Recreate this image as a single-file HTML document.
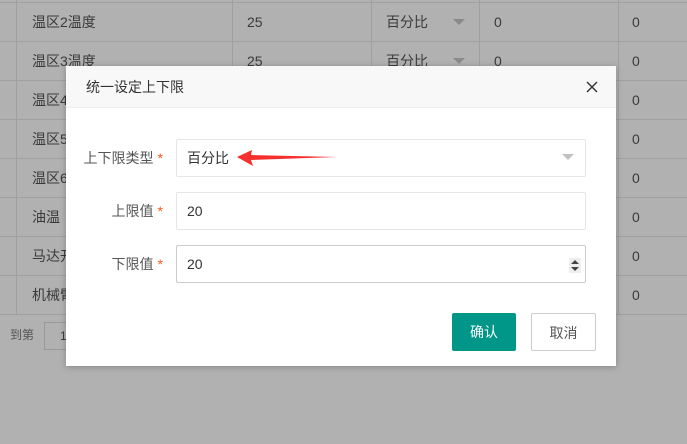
<!DOCTYPE html>
<html><head><meta charset="utf-8"><style>
*{margin:0;padding:0;box-sizing:border-box}
body{width:687px;height:444px;overflow:hidden;background:#b1b1b1;font-family:"Liberation Sans","Noto Sans CJK SC",sans-serif;font-size:14px;color:#3a3a3a;position:relative}
.hl{position:absolute;left:0;width:687px;height:1px;background:#a0a0a0}
.vl{position:absolute;top:0;width:1px;height:314px;background:#a0a0a0}
.t{position:absolute;line-height:16px}
.modal{position:absolute;left:66px;top:66px;width:550px;height:300px;background:#fff;box-shadow:0 1px 6px rgba(0,0,0,.25)}
.hd{height:42px;background:#f8f8f8;border-bottom:1px solid #eee;padding-left:20px;line-height:42px;color:#333;font-size:14px}
.lbl{position:absolute;right:453px;text-align:right;color:#555;line-height:38px;font-size:14px}
.lbl i{color:#ff5722;font-style:normal;margin-left:4px}
.inp{position:absolute;left:110px;width:410px;height:38px;border:1px solid #e6e6e6;border-radius:2px;padding-left:10px;line-height:36px;color:#333}
.btn{position:absolute;top:247px;height:38px;line-height:38px;text-align:center;border-radius:2px;font-size:14px}
.tri{position:absolute;left:453px}
</style></head><body>
<div class="hl" style="top:2px"></div><div class="hl" style="top:41px"></div><div class="hl" style="top:80px"></div><div class="hl" style="top:119px"></div><div class="hl" style="top:158px"></div><div class="hl" style="top:197px"></div><div class="hl" style="top:236px"></div><div class="hl" style="top:275px"></div><div class="hl" style="top:314px"></div>
<div class="vl" style="left:16px"></div><div class="vl" style="left:232px"></div><div class="vl" style="left:371px"></div><div class="vl" style="left:479px"></div><div class="vl" style="left:618px"></div>
<div class="t" style="left:32px;top:14px">温区2温度</div><div class="t" style="left:247px;top:14px">25</div><div class="t" style="left:386px;top:14px">百分比</div><svg class="tri" style="top:19px" width="12" height="7"><path d="M0 0H12L6 6Z" fill="#8a8a8a"/></svg><div class="t" style="left:494px;top:14px">0</div><div class="t" style="left:632px;top:14px">0</div>
<div class="t" style="left:32px;top:53px">温区3温度</div><div class="t" style="left:247px;top:53px">25</div><div class="t" style="left:386px;top:53px">百分比</div><svg class="tri" style="top:58px" width="12" height="7"><path d="M0 0H12L6 6Z" fill="#8a8a8a"/></svg><div class="t" style="left:494px;top:53px">0</div><div class="t" style="left:632px;top:53px">0</div>
<div class="t" style="left:32px;top:92px">温区4</div><div class="t" style="left:632px;top:92px">0</div>
<div class="t" style="left:32px;top:131px">温区5</div><div class="t" style="left:632px;top:131px">0</div>
<div class="t" style="left:32px;top:170px">温区6</div><div class="t" style="left:632px;top:170px">0</div>
<div class="t" style="left:32px;top:209px">油温</div><div class="t" style="left:632px;top:209px">0</div>
<div class="t" style="left:32px;top:248px">马达开</div><div class="t" style="left:632px;top:248px">0</div>
<div class="t" style="left:32px;top:287px">机械臂</div><div class="t" style="left:632px;top:287px">0</div>
<div class="t" style="left:10px;top:327px;font-size:12px;color:#555">到第</div>
<div style="position:absolute;left:44px;top:322px;width:30px;height:28px;border:1px solid #999"></div><div class="t" style="left:60px;top:328px;font-size:12px">1</div>
<div class="modal">
<div class="hd">统一设定上下限</div>
<svg style="position:absolute;left:520px;top:15px" width="12" height="12" viewBox="0 0 12 12"><path d="M1 1L11 11M11 1L1 11" stroke="#333" stroke-width="1.4"/></svg>
<div class="lbl" style="top:73px">上下限类型<i>*</i></div>
<div class="inp" style="top:73px">百分比</div>
<svg style="position:absolute;left:496px;top:88px" width="12" height="8"><path d="M0 0H12L6 6Z" fill="#c2c2c2"/></svg>
<svg style="position:absolute;left:171px;top:84px" width="100" height="16"><path d="M0 7L15 0L14 5L100 7L14 10L16 16Z" fill="#f5302f"/></svg>
<div class="lbl" style="top:126px">上限值<i>*</i></div>
<div class="inp" style="top:126px">20</div>
<div class="lbl" style="top:179px">下限值<i>*</i></div>
<div class="inp" style="top:179px;border-color:#ccc">20</div>
<div style="position:absolute;left:503px;top:192px;width:12px;height:15px;background:#eee"></div>
<svg style="position:absolute;left:504px;top:193px" width="10" height="13"><path d="M1 5L5 1L9 5ZM1 8L5 12L9 8Z" fill="#444"/></svg>
<div class="btn" style="left:386px;width:64px;background:#009688;color:#fff">确认</div>
<div class="btn" style="left:465px;width:65px;border:1px solid #ccc;color:#555;background:#fff">取消</div>
</div>
</body></html>
